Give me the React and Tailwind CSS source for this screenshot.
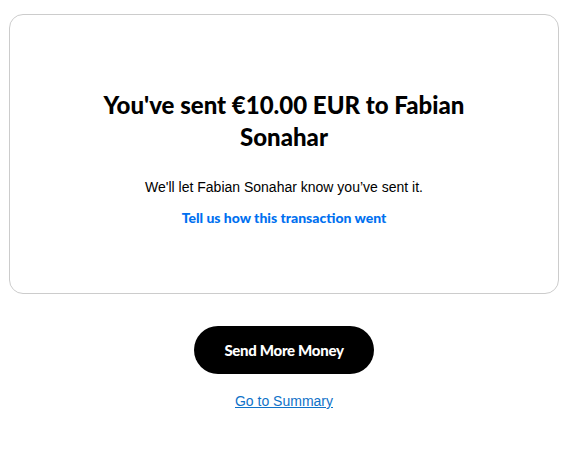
export default function App() {
  return (
    <div className="w-[564px] h-[460px] bg-white pt-[14px] pl-[9px]" style={{ fontFamily: '"Liberation Sans", Arial, sans-serif' }}>
      <div className="w-[550px] h-[280px] border border-[#cccccc] rounded-[14px] flex flex-col items-center pt-[74px]">
        <h1 className="text-[24px] leading-[32px] text-black text-center w-[400px]" style={{ fontFamily: 'Lato, sans-serif', fontWeight: 900 }}>
          You've sent €10.00 EUR to Fabian Sonahar
        </h1>
        <p className="mt-[24px] text-[14px] leading-[20px] text-black">We'll let Fabian Sonahar know you’ve sent it.</p>
        <a className="mt-[11px] text-[14px] leading-[20px] text-[#0070f0]" style={{ fontFamily: 'Lato, sans-serif', fontWeight: 900 }}>
          Tell us how this transaction went
        </a>
      </div>
      <div className="w-[550px] flex flex-col items-center pt-[32px]">
        <button className="w-[180px] h-[48px] rounded-full bg-black text-white text-[15px] tracking-[-0.3px]" style={{ fontFamily: 'Lato, sans-serif', fontWeight: 900 }}>
          Send More Money
        </button>
        <a className="mt-[17px] text-[14px] leading-[20px] text-[#1072c8] underline">Go to Summary</a>
      </div>
    </div>
  );
}
